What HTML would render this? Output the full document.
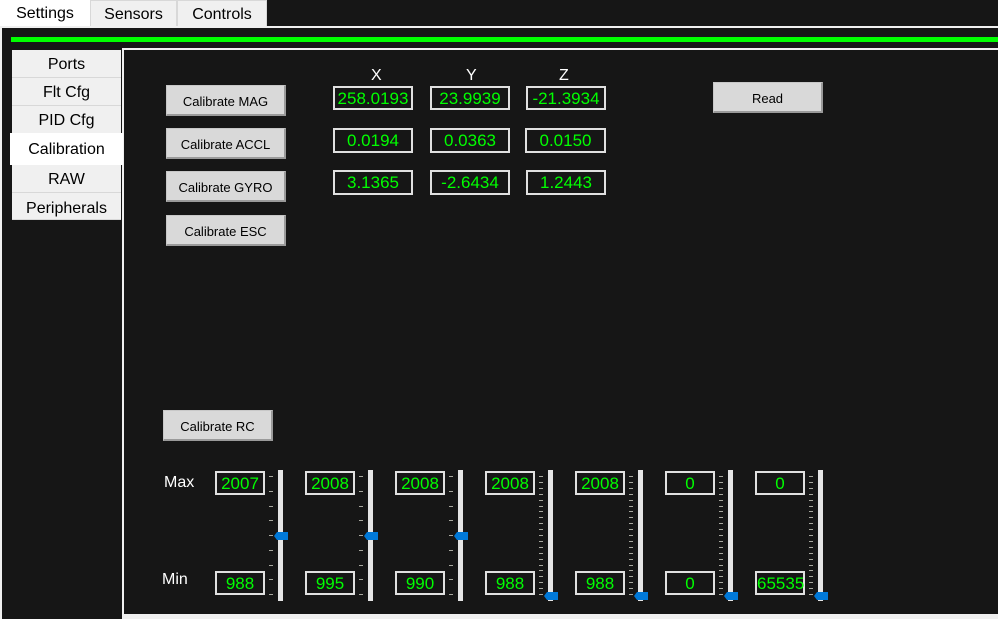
<!DOCTYPE html>
<html><head><meta charset="utf-8"><style>
*{margin:0;padding:0;box-sizing:border-box}
body{width:998px;height:619px;background:#161616;position:relative;overflow:hidden;font-family:"Liberation Sans",sans-serif}
.a{position:absolute}
.tab{position:absolute;top:0;height:27px;background:#f0f0f0;border:1px solid #d8d8d8;color:#000;font-size:16px;text-align:center;line-height:28px}
.lt{position:absolute;left:12px;width:109px;background:#f0f0f0;border-bottom:1px solid #d8d8d8;color:#000;font-size:16px;text-align:center}
.btn{position:absolute;background:#d9d9d9;border:1px solid #c8c8c8;border-right:2px solid #9a9a9a;border-bottom:2px solid #9a9a9a;color:#000;font-size:13px;text-align:center}
.box{position:absolute;border:2px solid #e0e0e0;color:#00ff00;font-size:17px;text-align:center;background:#161616;line-height:22px}
.lbl{position:absolute;color:#fff;font-size:16px}
.trk{position:absolute;width:5px;height:131px;background:#e6e6e6;top:470px}
.tk{position:absolute;width:4px;height:1px;background:#a9a9a0}
.th{position:absolute;width:14px;height:8px;background:#0078d7;clip-path:polygon(3px 0,100% 0,100% 100%,3px 100%,0 50%)}
</style></head><body>
<div class="a" style="left:0;top:0;width:90px;height:27px;background:#fff;color:#000;font-size:16px;text-align:center;line-height:28px">Settings</div>
<div class="tab" style="left:90px;width:87px">Sensors</div>
<div class="tab" style="left:177px;width:90px">Controls</div>
<div class="a" style="left:0;top:26px;width:998px;height:2px;background:#f0f0f0"></div>
<div class="a" style="left:0;top:26px;width:2px;height:593px;background:#f0f0f0"></div>
<div class="a" style="left:11px;top:37px;width:987px;height:5px;background:#00ff00"></div>
<div class="a" style="left:122px;top:48px;width:876px;height:568px;border:2px solid #f0f0f0;border-right:none"></div>
<div class="a" style="left:122px;top:616px;width:876px;height:3px;background:#f0f0f0"></div>
<div class="lt" style="top:50px;height:28px;line-height:29px">Ports</div>
<div class="lt" style="top:78px;height:28px;line-height:29px">Flt Cfg</div>
<div class="lt" style="top:106px;height:28px;line-height:29px">PID Cfg</div>
<div class="a" style="left:10px;top:133px;width:113px;height:32px;background:#fff;color:#000;font-size:16px;text-align:center;line-height:33px">Calibration</div>
<div class="lt" style="top:165px;height:28px;line-height:30px">RAW</div>
<div class="lt" style="top:193px;height:27px;line-height:31px">Peripherals</div>
<div class="btn" style="left:166px;top:85px;width:120px;height:31px;line-height:31px">Calibrate MAG</div>
<div class="btn" style="left:166px;top:128px;width:120px;height:31px;line-height:31px">Calibrate ACCL</div>
<div class="btn" style="left:166px;top:171px;width:120px;height:31px;line-height:31px">Calibrate GYRO</div>
<div class="btn" style="left:166px;top:215px;width:120px;height:31px;line-height:31px">Calibrate ESC</div>
<div class="btn" style="left:713px;top:82px;width:110px;height:31px;line-height:31px">Read</div>
<div class="btn" style="left:163px;top:410px;width:110px;height:31px;line-height:31px">Calibrate RC</div>
<div class="lbl" style="left:371px;top:67px">X</div>
<div class="lbl" style="left:466px;top:67px">Y</div>
<div class="lbl" style="left:559px;top:67px">Z</div>
<div class="box" style="left:333px;top:86px;width:80px;height:24px">258.0193</div>
<div class="box" style="left:430px;top:86px;width:80px;height:24px">23.9939</div>
<div class="box" style="left:526px;top:86px;width:80px;height:24px">-21.3934</div>
<div class="box" style="left:333px;top:128px;width:80px;height:25px">0.0194</div>
<div class="box" style="left:430px;top:128px;width:80px;height:25px">0.0363</div>
<div class="box" style="left:525px;top:128px;width:81px;height:25px">0.0150</div>
<div class="box" style="left:333px;top:170px;width:80px;height:25px">3.1365</div>
<div class="box" style="left:430px;top:170px;width:80px;height:25px">-2.6434</div>
<div class="box" style="left:526px;top:170px;width:80px;height:25px">1.2443</div>
<div class="lbl" style="left:164px;top:474px">Max</div>
<div class="lbl" style="left:162px;top:571px">Min</div>
<div id="s"></div>
<script>
var mx=["2007","2008","2008","2008","2008","0","0"],mn=["988","995","990","988","988","0","65535"],h="";
for(var i=0;i<7;i++){var x=215+90*i;
h+='<div class="box" style="left:'+x+'px;top:471px;width:50px;height:24px">'+mx[i]+'</div>';
h+='<div class="box" style="left:'+x+'px;top:571px;width:50px;height:24px">'+mn[i]+'</div>';
h+='<div class="trk" style="left:'+(x+63)+'px"></div>';
var n=i<3?9:21;for(var k=0;k<n;k++){var y=476+Math.round(k*118/(n-1));h+='<div class="tk" style="left:'+(x+54)+'px;top:'+y+'px"></div>';}
h+='<div class="th" style="left:'+(x+59)+'px;top:'+(i<3?532:592)+'px"></div>';}
document.getElementById("s").innerHTML=h;
</script>
</body></html>
